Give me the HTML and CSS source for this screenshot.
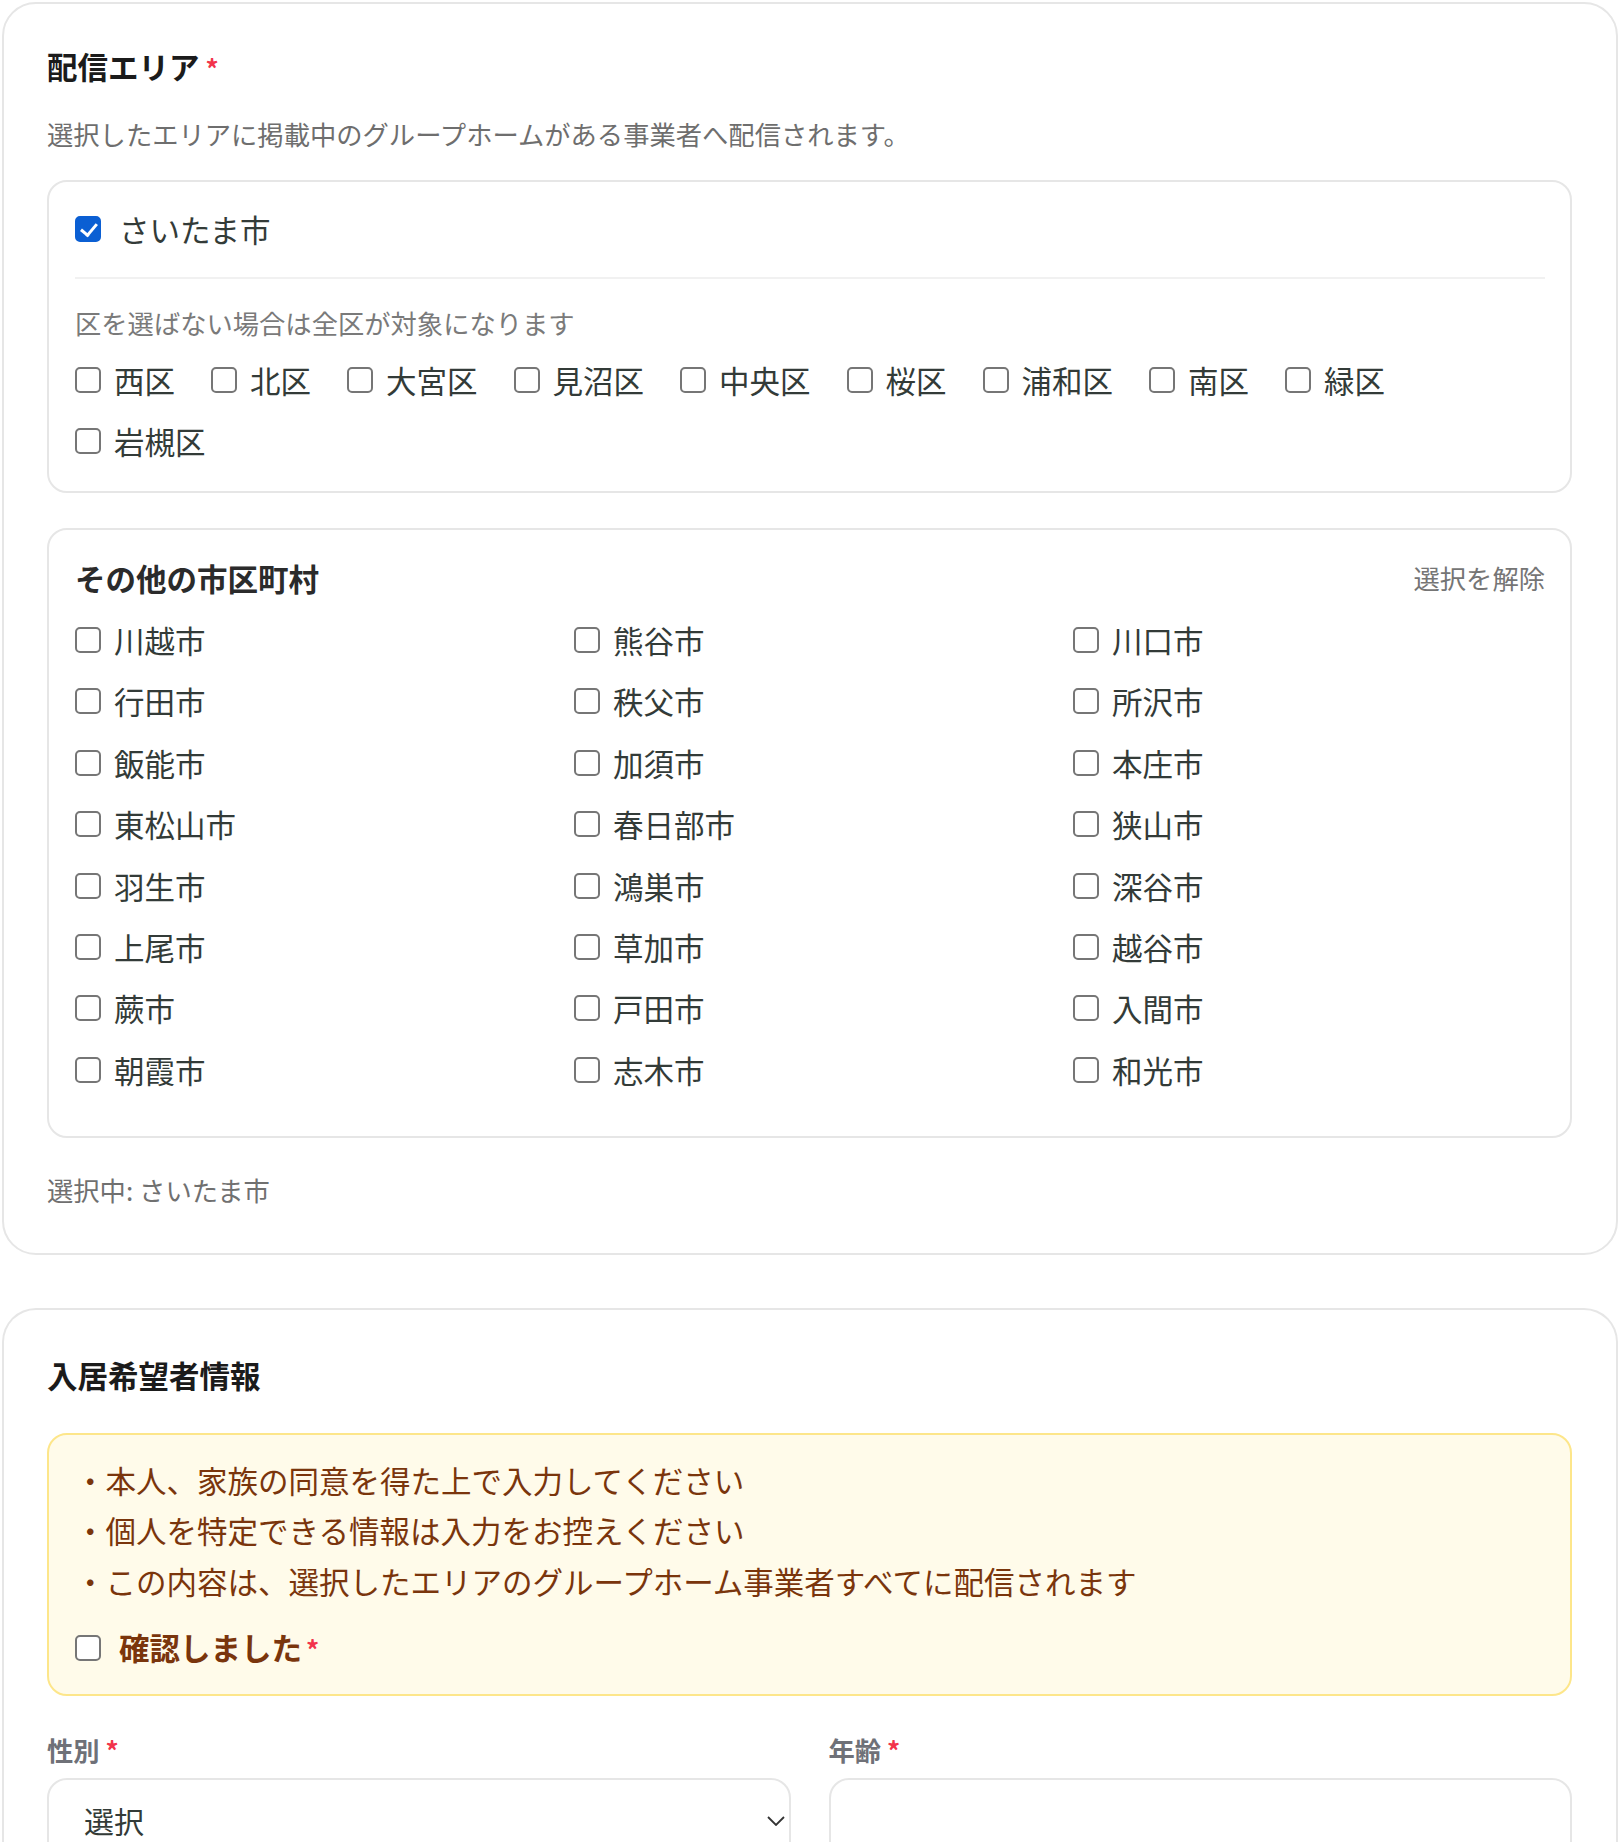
FILE: index.html
```html
<!DOCTYPE html>
<html lang="ja">
  <head>
    <meta charset="UTF-8" />
    <meta name="viewport" content="width=device-width, initial-scale=1.0" />
    <title>配信エリア・入居希望者情報</title>
    <link rel="stylesheet" href="styles.css">
  </head>
  <body>
    <section class="card">
      <h2 class="section-title">配信エリア<span class="req">*</span></h2>
      <p class="section-desc">選択したエリアに掲載中のグループホームがある事業者へ配信されます。</p>

      <div class="area-box">
        <label class="check city-check">
          <input type="checkbox" checked />
          <span>さいたま市</span>
        </label>
        <div class="divider"></div>
        <p class="hint">区を選ばない場合は全区が対象になります</p>
        <div class="ward-list">
          <label class="check"><input type="checkbox" /><span>西区</span></label>
          <label class="check"><input type="checkbox" /><span>北区</span></label>
          <label class="check"><input type="checkbox" /><span>大宮区</span></label>
          <label class="check"><input type="checkbox" /><span>見沼区</span></label>
          <label class="check"><input type="checkbox" /><span>中央区</span></label>
          <label class="check"><input type="checkbox" /><span>桜区</span></label>
          <label class="check"><input type="checkbox" /><span>浦和区</span></label>
          <label class="check"><input type="checkbox" /><span>南区</span></label>
          <label class="check"><input type="checkbox" /><span>緑区</span></label>
          <label class="check"><input type="checkbox" /><span>岩槻区</span></label>
        </div>
      </div>

      <div class="area-box other-box">
        <div class="other-head">
          <h3 class="other-title">その他の市区町村</h3>
          <button class="clear-btn" type="button">選択を解除</button>
        </div>
        <div class="city-grid">
          <label class="check"><input type="checkbox" /><span>川越市</span></label>
          <label class="check"><input type="checkbox" /><span>熊谷市</span></label>
          <label class="check"><input type="checkbox" /><span>川口市</span></label>
          <label class="check"><input type="checkbox" /><span>行田市</span></label>
          <label class="check"><input type="checkbox" /><span>秩父市</span></label>
          <label class="check"><input type="checkbox" /><span>所沢市</span></label>
          <label class="check"><input type="checkbox" /><span>飯能市</span></label>
          <label class="check"><input type="checkbox" /><span>加須市</span></label>
          <label class="check"><input type="checkbox" /><span>本庄市</span></label>
          <label class="check"><input type="checkbox" /><span>東松山市</span></label>
          <label class="check"><input type="checkbox" /><span>春日部市</span></label>
          <label class="check"><input type="checkbox" /><span>狭山市</span></label>
          <label class="check"><input type="checkbox" /><span>羽生市</span></label>
          <label class="check"><input type="checkbox" /><span>鴻巣市</span></label>
          <label class="check"><input type="checkbox" /><span>深谷市</span></label>
          <label class="check"><input type="checkbox" /><span>上尾市</span></label>
          <label class="check"><input type="checkbox" /><span>草加市</span></label>
          <label class="check"><input type="checkbox" /><span>越谷市</span></label>
          <label class="check"><input type="checkbox" /><span>蕨市</span></label>
          <label class="check"><input type="checkbox" /><span>戸田市</span></label>
          <label class="check"><input type="checkbox" /><span>入間市</span></label>
          <label class="check"><input type="checkbox" /><span>朝霞市</span></label>
          <label class="check"><input type="checkbox" /><span>志木市</span></label>
          <label class="check"><input type="checkbox" /><span>和光市</span></label>
        </div>
      </div>

      <p class="selected">選択中: さいたま市</p>
    </section>

    <section class="card card-second">
      <h2 class="section-title">入居希望者情報</h2>

      <div class="notice">
        <ul class="notice-list">
          <li>・本人、家族の同意を得た上で入力してください</li>
          <li>・個人を特定できる情報は入力をお控えください</li>
          <li>・この内容は、選択したエリアのグループホーム事業者すべてに配信されます</li>
        </ul>
        <label class="check confirm">
          <input type="checkbox" />
          <span>確認しました<span class="req">*</span></span>
        </label>
      </div>

      <div class="fields">
        <div class="field">
          <div class="field-label">性別 <span class="req">*</span></div>
          <div class="select-wrap">
            <select class="select-box">
              <option>選択</option>
              <option>男性</option>
              <option>女性</option>
            </select>
            <svg class="chevron" width="18" height="10" viewBox="0 0 18 10">
              <path d="M1 1 L9 9 L17 1" fill="none" stroke="#333" stroke-width="1.8" />
            </svg>
          </div>
        </div>
        <div class="field">
          <div class="field-label">年齢 <span class="req">*</span></div>
          <input class="text-input" type="text" />
        </div>
      </div>
    </section>
  </body>
</html>
```

FILE: styles.css
```css
* {
  margin: 0;
  padding: 0;
  box-sizing: border-box;
}

body {
  font-family: "Noto Sans CJK JP", "Noto Sans", sans-serif;
  background: #fff;
  color: #333b38;
  overflow: hidden;
}

.card {
  margin: 2px 2px 0 2px;
  border: 2px solid #e6e6e6;
  border-radius: 34px;
  padding: 40px 44px 43px 43px;
}

.card-second {
  margin-top: 53px;
  padding-top: 43px;
  border-bottom: none;
  border-bottom-left-radius: 0;
  border-bottom-right-radius: 0;
}

.section-title {
  font-size: 30.5px;
  line-height: 44px;
  font-weight: 700;
  color: #1b1b1b;
}

.req {
  color: #f2334b;
  font-size: 26px;
  margin-left: 6px;
  font-weight: 700;
}

.section-desc {
  margin-top: 24px;
  font-size: 26.3px;
  line-height: 40px;
  color: #6e6e6e;
}

.area-box {
  margin-top: 26px;
  border: 2px solid #e6e6e6;
  border-radius: 20px;
  padding: 25px 25px 28px 26px;
}

.other-box {
  margin-top: 35px;
  padding-top: 26px;
  padding-bottom: 44px;
}

.check {
  display: flex;
  align-items: center;
  gap: 13px;
  height: 44px;
  font-size: 30.5px;
  line-height: 44px;
  color: #333b38;
  white-space: nowrap;
}

.check input {
  appearance: none;
  position: relative;
  width: 26px;
  height: 26px;
  flex-shrink: 0;
  border: 2px solid #767676;
  border-radius: 5px;
  background: #fff;
}

.check input:checked {
  background: #0b5fd3;
  border-color: #0b5fd3;
}

.check input:checked::after {
  content: "";
  position: absolute;
  left: 7px;
  top: 2px;
  width: 7px;
  height: 13px;
  border-right: 3.5px solid #fff;
  border-bottom: 3.5px solid #fff;
  transform: rotate(40deg);
}

.city-check {
  gap: 18px;
}

.divider {
  margin-top: 26px;
  height: 2px;
  background: #f1f1f1;
}

.hint {
  margin-top: 24px;
  font-size: 26.3px;
  line-height: 40px;
  color: #7a7a7a;
}

.ward-list {
  margin-top: 15px;
  display: flex;
  flex-wrap: wrap;
  column-gap: 36px;
  row-gap: 17px;
}

.other-head {
  display: flex;
  align-items: center;
  justify-content: space-between;
  height: 44px;
}

.other-title {
  font-size: 30.5px;
  line-height: 44px;
  font-weight: 700;
  color: #2b2b2b;
}

.clear-btn {
  background: none;
  border: none;
  font-family: inherit;
  font-size: 26.3px;
  line-height: 40px;
  color: #757575;
  cursor: pointer;
}

.city-grid {
  margin-top: 18px;
  display: grid;
  grid-template-columns: repeat(3, 1fr);
  column-gap: 27px;
  row-gap: 17.4px;
}

.selected {
  margin-top: 32px;
  font-size: 26.3px;
  line-height: 40px;
  color: #707070;
}

.notice {
  margin-top: 36px;
  background: #fffbea;
  border: 2px solid #fde68a;
  border-radius: 20px;
  padding: 20px 26px 24px 26px;
  color: #7a350c;
}

.notice-list {
  list-style: none;
  font-size: 30.5px;
  line-height: 50.5px;
}

.confirm {
  margin-top: 20px;
  gap: 18px;
  color: #7a350c;
  font-weight: 700;
}

.confirm .req {
  margin-left: 4px;
}

.fields {
  margin-top: 34px;
  display: grid;
  grid-template-columns: 1fr 1fr;
  column-gap: 38px;
}

.field-label {
  font-size: 26.3px;
  line-height: 39px;
  font-weight: 700;
  color: #6f7178;
}

.field-label .req {
  margin-left: 0;
}

.select-wrap {
  position: relative;
  margin-top: 9px;
}

.select-box,
.text-input {
  display: block;
  width: 100%;
  height: 84px;
  border: 2px solid #e6e6e6;
  border-radius: 20px;
  background: #fff;
  font-family: inherit;
  font-size: 30px;
  color: #333b38;
  padding: 0 40px 0 35px;
  appearance: none;
  outline: none;
}

.text-input {
  margin-top: 9px;
}

.chevron {
  position: absolute;
  right: 6px;
  top: 38px;
}
```
